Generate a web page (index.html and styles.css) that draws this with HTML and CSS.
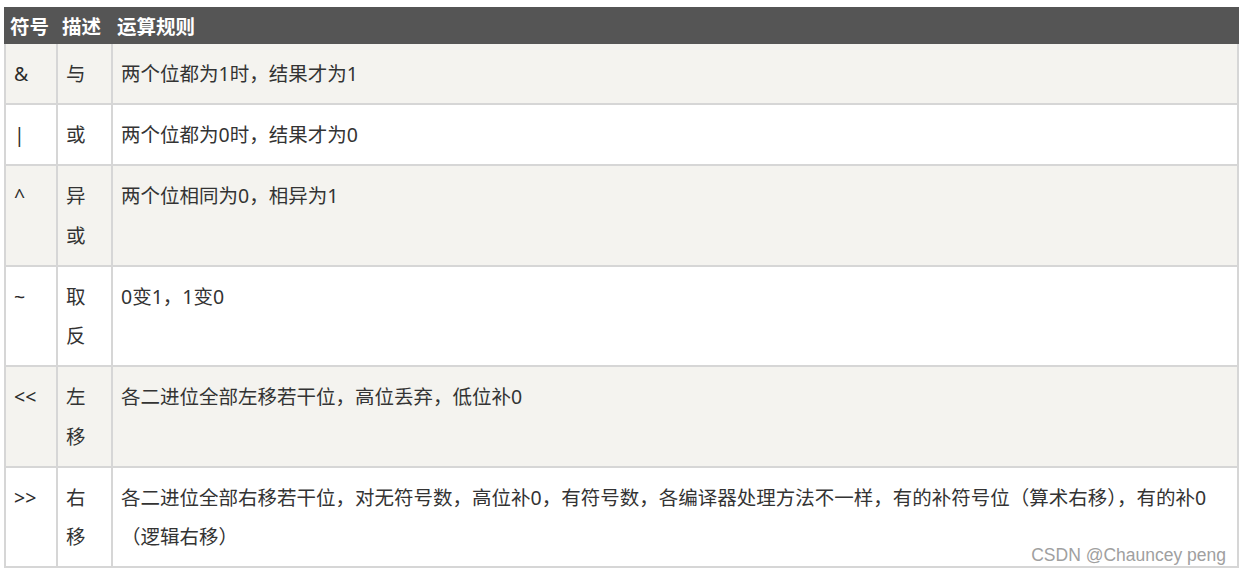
FILE: index.html
```html
<!DOCTYPE html>
<html lang="zh-CN">
<head>
<meta charset="utf-8">
<title>位运算符</title>
<link rel="stylesheet" href="styles.css">
</head>
<body>
<div class="page">
  <table class="ops">
    <thead>
      <tr>
        <th class="c1">符号</th>
        <th class="c2">描述</th>
        <th class="c3">运算规则</th>
      </tr>
    </thead>
    <tbody>
      <tr class="alt">
        <td class="sym">&amp;</td>
        <td>与</td>
        <td>两个位都为1时，结果才为1</td>
      </tr>
      <tr>
        <td class="sym">|</td>
        <td>或</td>
        <td>两个位都为0时，结果才为0</td>
      </tr>
      <tr class="alt">
        <td class="sym">^</td>
        <td>异或</td>
        <td>两个位相同为0，相异为1</td>
      </tr>
      <tr>
        <td class="sym">~</td>
        <td>取反</td>
        <td>0变1，1变0</td>
      </tr>
      <tr class="alt">
        <td class="sym">&lt;&lt;</td>
        <td>左移</td>
        <td>各二进位全部左移若干位，高位丢弃，低位补0</td>
      </tr>
      <tr>
        <td class="sym">&gt;&gt;</td>
        <td>右移</td>
        <td>各二进位全部右移若干位，对无符号数，高位补0，有符号数，各编译器处理方法不一样，有的补符号位（算术右移），有的补0（逻辑右移）</td>
      </tr>
    </tbody>
  </table>
  <div class="watermark">CSDN @Chauncey peng</div>
</div>
</body>
</html>
```

FILE: styles.css
```css
* {
  box-sizing: border-box;
}

html, body {
  margin: 0;
  padding: 0;
  background: #ffffff;
}

.page {
  position: relative;
  width: 1242px;
  height: 575px;
  padding: 7px 3px 0 4px;
  overflow: hidden;
}

.ops {
  width: 1235px;
  table-layout: fixed;
  border-collapse: separate;
  border-spacing: 0;
  font-family: "Noto Sans", "Noto Sans CJK SC", sans-serif;
  font-size: 19.5px;
  color: #333333;
}

.ops th,
.ops td {
  border-right: 2px solid #d6d6d6;
  border-bottom: 2px solid #d6d6d6;
  text-align: left;
  vertical-align: top;
  font-weight: normal;
}

.ops th:first-child,
.ops td:first-child {
  border-left: 2px solid #d6d6d6;
}

.ops .c1 { width: 54px; }
.ops .c2 { width: 55px; }
.ops .c3 { width: 1126px; }

.ops th {
  background: #555555;
  border-color: #555555;
  color: #ffffff;
  font-weight: bold;
  line-height: 27px;
  padding: 6px 4px 2px 4px;
}

.ops th:first-child {
  border-left-color: #555555;
}

.ops td {
  line-height: 39.5px;
  padding: 10px 8px 9.5px 8px;
}

.ops td.sym {
  color: #2b2b2b;
}

.ops tr.alt td {
  background: #f4f3ef;
}

.watermark {
  position: absolute;
  top: 545px;
  right: 16px;
  font-family: "Liberation Sans", Arial, sans-serif;
  font-size: 17.5px;
  line-height: 20px;
  color: #a0a0a0;
  white-space: nowrap;
}
```
